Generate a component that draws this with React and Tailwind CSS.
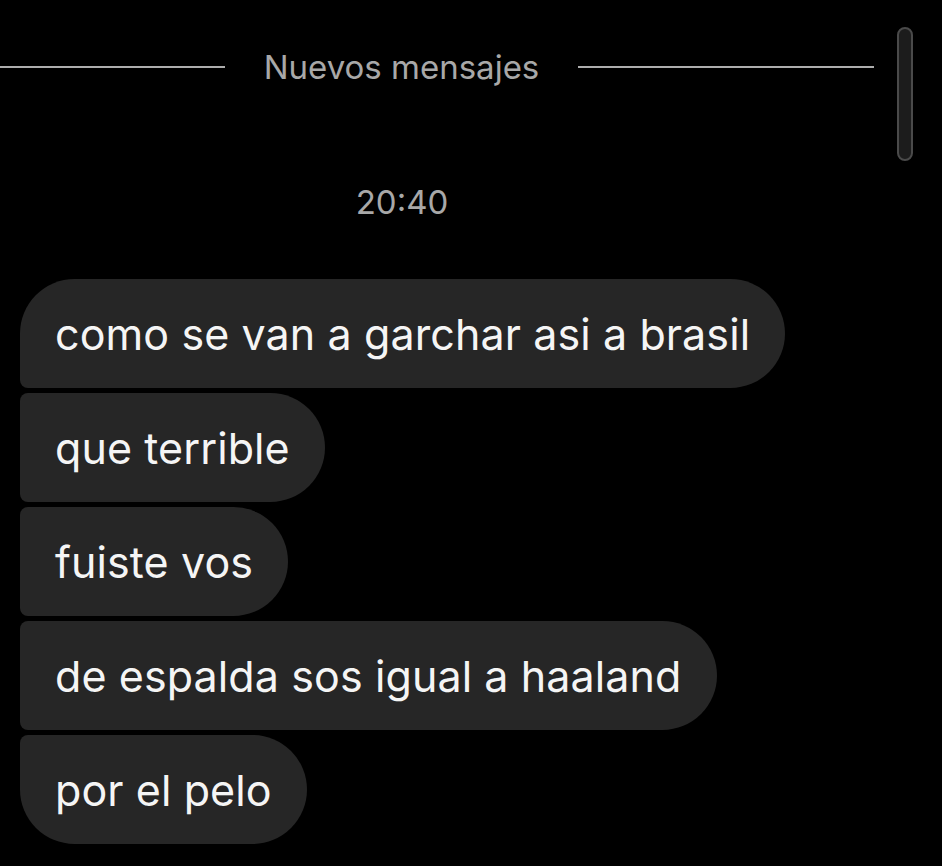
export default function App() {
  const msgs = [
    "como se van a garchar asi a brasil",
    "que terrible",
    "fuiste vos",
    "de espalda sos igual a haaland",
    "por el pelo",
  ];
  const shape = (i) => {
    if (i === 0) return "rounded-tl-[55px] rounded-bl-[8px]";
    if (i === msgs.length - 1) return "rounded-tl-[8px] rounded-bl-[55px]";
    return "rounded-tl-[8px] rounded-bl-[8px]";
  };
  return (
    <div
      className="relative w-[942px] h-[866px] bg-black overflow-hidden"
      style={{ fontFamily: "Inter, 'Liberation Sans', sans-serif" }}
    >
      <div className="w-[874px] pt-[47px]">
        <div className="flex items-center h-[40px]">
          <div className="w-[225px] h-[2px] bg-[#adadad]" />
          <div className="flex-1 text-center text-[33px] leading-none text-[#a8a8a8]">
            Nuevos mensajes
          </div>
          <div className="w-[296px] h-[2px] bg-[#adadad]" />
        </div>
        <div className="mt-[95px] h-[40px] w-[804px] flex items-center justify-center text-[33px] leading-none text-[#a8a8a8]">
          20:40
        </div>
      </div>
      <div className="mt-[57px] pl-[20px] flex flex-col items-start gap-[5px]">
        {msgs.map((m, i) => (
          <div
            key={i}
            className={`h-[109px] flex items-center px-[35px] bg-[#262626] text-[#f5f5f5] text-[43px] leading-none tracking-[0.1px] rounded-r-[55px] ${shape(i)}`}
          >
            <span className="mt-[2px]">{m}</span>
          </div>
        ))}
      </div>
      <div className="absolute left-[897px] top-[27px] w-[16px] h-[134px] rounded-full bg-[#1c1c1c] border-2 border-[#4a4a4a]" />
    </div>
  );
}
